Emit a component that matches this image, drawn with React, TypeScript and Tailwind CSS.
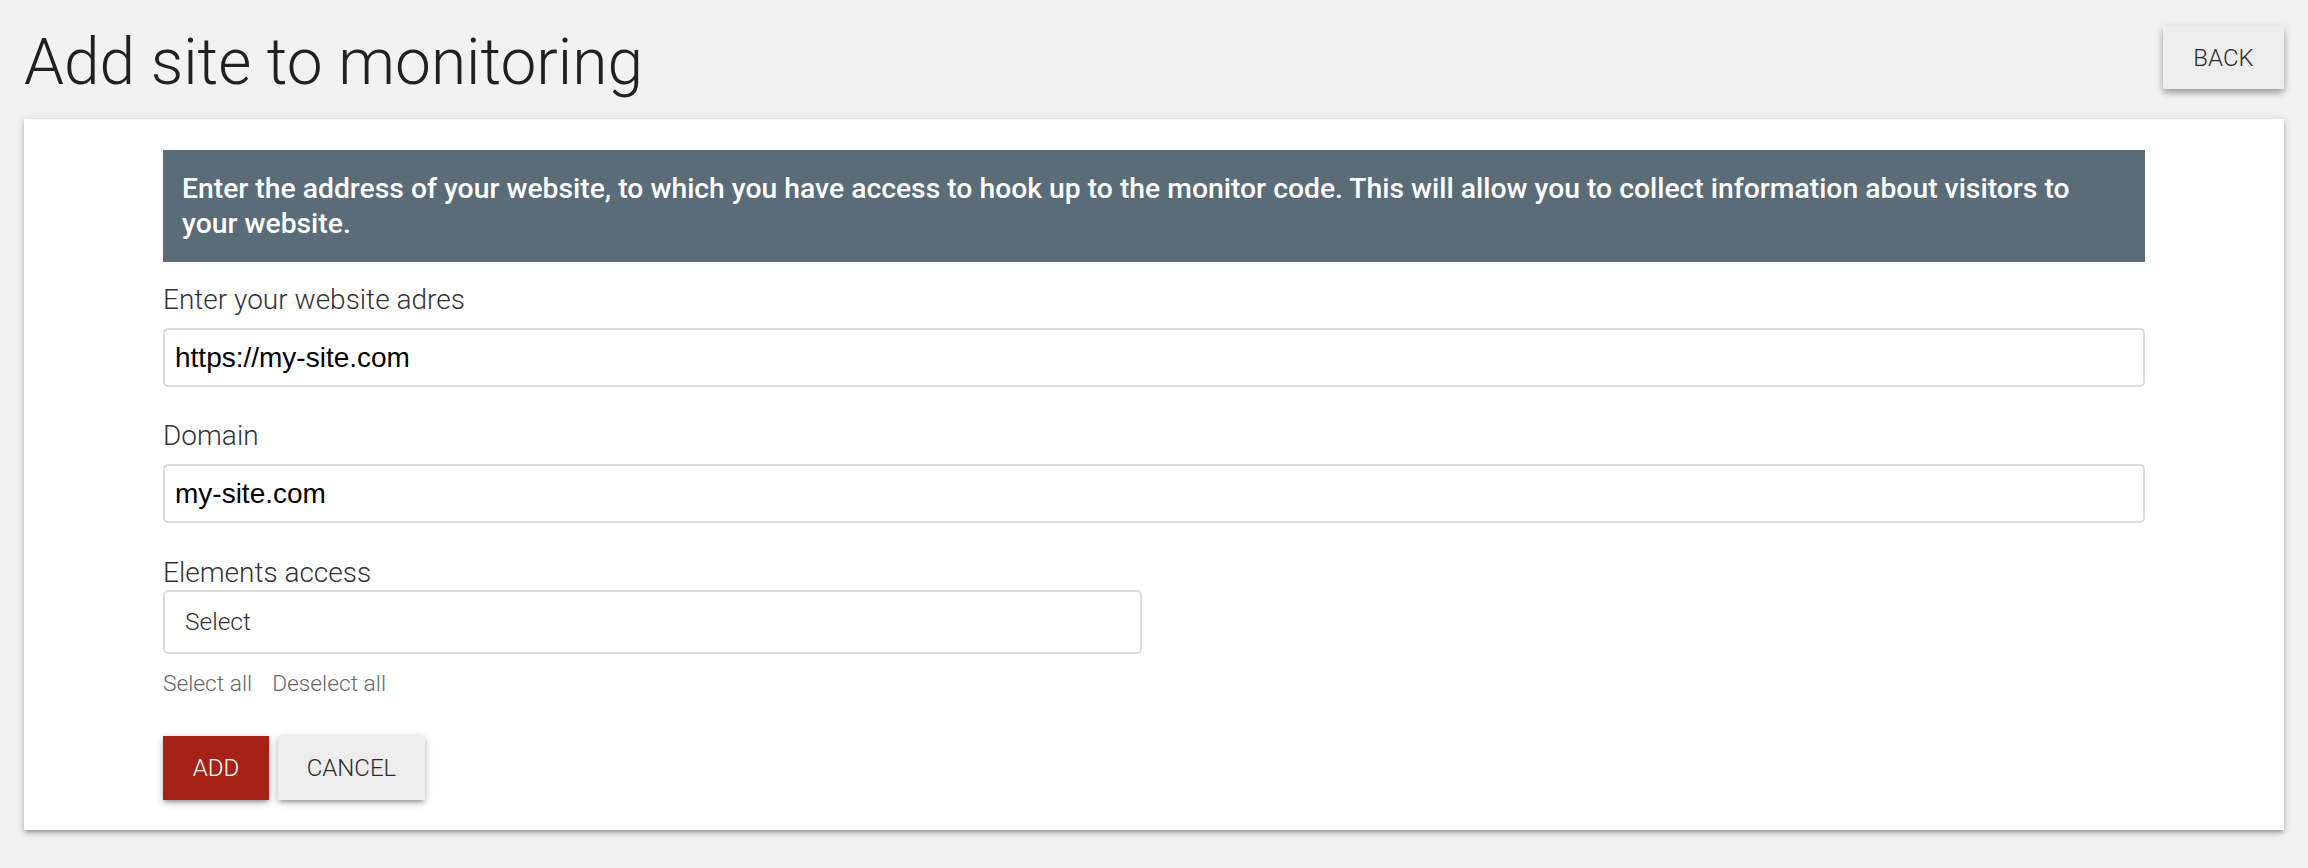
import { type FC } from "react";

const roboto = { fontFamily: "Roboto, 'Noto Sans', sans-serif" };

const Field: FC<{ label: string; value: string; first?: boolean }> = ({ label, value, first }) => (
	<div className={first ? "mt-[23px]" : "mt-[34px]"}>
		<label className="block text-[28px] leading-[30px] font-light text-[#333333]">{label}</label>
		<input
			readOnly
			value={value}
			className="mt-[13px] block h-[59px] w-full rounded-[5px] border-2 border-[#dcdcdc] bg-white pl-[10px] text-[28px] text-black outline-none"
			style={{ fontFamily: "'Liberation Sans', Arial, sans-serif" }}
		/>
	</div>
);

export default function App() {
	return (
		<div className="min-h-[868px] bg-[#f2f2f2] px-[24px] pb-[38px]" style={roboto}>
			<div className="flex items-start justify-between">
				<h1 className="mt-[31px] text-[64px] leading-[64px] font-light text-[#212121]">Add site to monitoring</h1>
				<button
					type="button"
					className="mt-[26px] h-[63px] w-[121px] bg-[#ededed] text-[24px] font-light text-[#2b2b2b] shadow-[0_4px_5px_0_rgba(0,0,0,0.14),0_2px_9px_1px_rgba(0,0,0,0.12),0_4px_8px_-2px_rgba(0,0,0,0.2)]"
				>
					BACK
				</button>
			</div>

			<div className="mt-[24px] bg-white px-[139px] pt-[31px] pb-[30px] shadow-[0_3px_4px_0_rgba(0,0,0,0.14),0_5px_2px_-3px_rgba(0,0,0,0.12),0_2px_9px_0_rgba(0,0,0,0.2)]">
				<div className="bg-[#5a6c77] px-[19px] py-[21px] text-[28.3px] leading-[35px] font-medium text-white">
					Enter the address of your website, to which you have access to hook up to the monitor code. This will allow you to collect information about visitors to
					<br />
					your website.
				</div>

				<Field first label="Enter your website adres" value="https://my-site.com" />
				<Field label="Domain" value="my-site.com" />

				<div className="mt-[35px]">
					<label className="block text-[28px] leading-[30px] font-light text-[#333333]">Elements access</label>
					<div className="mt-[2px] flex h-[64px] w-[979px] items-center rounded-[5px] border-2 border-[#dcdcdc] pl-[20px] text-[24.5px] font-light text-[#333333]">
						Select
					</div>
				</div>

				<div className="mt-[17px] flex gap-[20px] text-[22.75px] leading-[26px] font-light text-[#666666]">
					<span>Select all</span>
					<span>Deselect all</span>
				</div>

				<div className="mt-[39px] flex gap-[9px]">
					<button
						type="button"
						className="h-[64px] w-[106px] bg-[#a52216] text-[24px] font-light text-white shadow-[0_3px_4px_0_rgba(0,0,0,0.14),0_5px_2px_-3px_rgba(0,0,0,0.12),0_2px_9px_0_rgba(0,0,0,0.2)]"
					>
						ADD
					</button>
					<button
						type="button"
						className="h-[64px] w-[147px] bg-[#ededed] text-[24px] font-light text-[#2b2b2b] shadow-[0_3px_4px_0_rgba(0,0,0,0.14),0_5px_2px_-3px_rgba(0,0,0,0.12),0_2px_9px_0_rgba(0,0,0,0.2)]"
					>
						CANCEL
					</button>
				</div>
			</div>
		</div>
	);
}
